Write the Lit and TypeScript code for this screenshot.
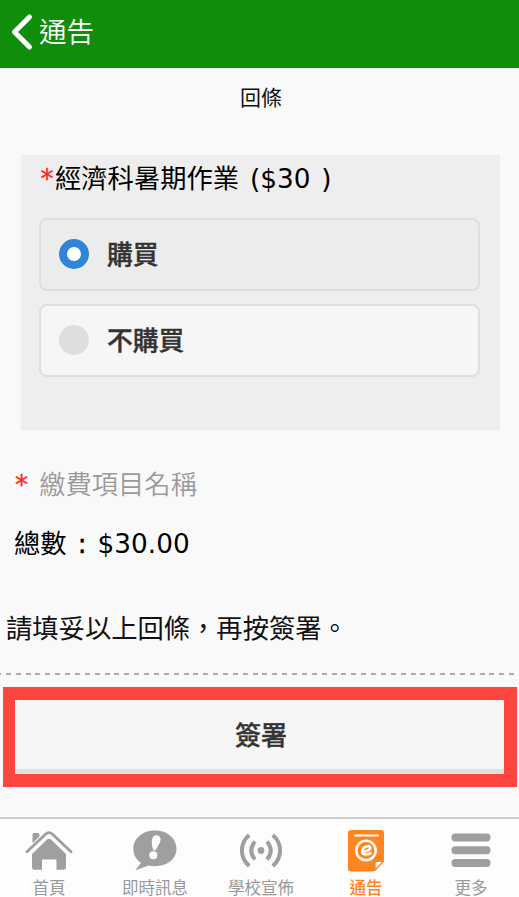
import { LitElement, html, css, svg } from "lit";
import { customElement, property, state } from "lit/decorators.js";
import { classMap } from "lit/directives/class-map.js";

const icons = {
  home: svg`<svg width="50" height="44" viewBox="0 0 50 44"><g fill="#9f9f9f"><path d="M8.500 18V5.500Q8.500 4 10 4H14Q15.500 4 15.500 5.500V12Z"/><path d="M8 25L23 10.500Q25 8.800 27 10.500L42 25V38Q42 40.700 39.500 40.700H32.500V30.500H18V40.700H10.500Q8 40.700 8 38Z"/></g><path d="M3 22.800L21.500 5.200Q25 2 28.500 5.200L47 22.800" fill="none" stroke="#fdfdfd" stroke-width="5"/><path d="M3 22.800L21.500 5.200Q25 2 28.500 5.200L47 22.800" fill="none" stroke="#9f9f9f" stroke-width="2.800" stroke-linecap="round"/></svg>`,
  message: svg`<svg width="48" height="44" viewBox="0 0 48 44"><path d="M24 1.500C12 1.500 2.300 9 2.300 20C2.300 26 5.500 31 10 33.800L4.200 41.500L17.500 36.500C32 39.500 45.500 32 45.500 20C45.500 9 36 1.500 24 1.500Z" fill="#9f9f9f"/><path d="M25 6.200C29 6.200 30.300 9 29.200 13L25 20.500Q23.500 22.700 22 20.500C20 15 20 6.200 25 6.200Z" fill="#fdfdfd"/><circle cx="22.300" cy="26.300" r="4" fill="#fdfdfd"/></svg>`,
  broadcast: svg`<svg width="48" height="44" viewBox="0 0 48 44"><circle cx="24" cy="21.500" r="3.400" fill="#9f9f9f"/><g fill="none" stroke="#9f9f9f" stroke-width="4"><path d="M18 12.500Q10.500 21.500 18 30.500M30 12.500Q37.500 21.500 30 30.500"/><path d="M12.200 6C2.500 14.500 2.500 28.500 12.200 37M35.800 6C45.500 14.500 45.500 28.500 35.800 37"/></g></svg>`,
  notice: svg`<svg width="48" height="44" viewBox="0 0 48 44"><path d="M9 1H39Q42 1 42 4V31.500L32 42.500H9Q6 42.500 6 39.500V4Q6 1 9 1Z" fill="#ff8520"/><path d="M12.500 6.500H36" stroke="#fdfdfd" stroke-width="2" stroke-linecap="round"/><circle cx="24" cy="21.500" r="9.700" fill="none" stroke="#fdfdfd" stroke-width="2.500"/><path d="M19.300 22.700C24 22.700 29 20.700 28.200 18.300C27.200 16 20.800 17.300 20.300 22C20 26 25.500 26.500 29.500 23.500" fill="none" stroke="#fdfdfd" stroke-width="2.700"/><path d="M42.500 31V43H31.500Z" fill="#fdfdfd"/><path d="M33 41.300V32.300H41.400Z" fill="#fdfdfd" stroke="#ff8520" stroke-width="1.300" stroke-linejoin="round"/></svg>`,
  more: svg`<svg width="48" height="44" viewBox="0 0 48 44"><g fill="#9f9f9f"><rect x="4.500" y="4.500" width="39" height="8" rx="3.700"/><rect x="4.500" y="17.200" width="39" height="8" rx="3.700"/><rect x="4.500" y="30" width="39" height="8" rx="3.700"/></g></svg>`,
};

@customElement("radio-option")
class RadioOption extends LitElement {
  @property() label = "";
  @property({ type: Boolean }) checked = false;

  static styles = css`
    :host { display: block; }
    .option {
      box-sizing: border-box;
      height: 73px;
      border: 2px solid #dedede;
      border-radius: 8px;
      background: #f6f6f6;
      display: flex;
      align-items: center;
      padding: 0 0 2px 18px;
      gap: 18px;
      color: #333;
      font-size: 25.8px;
      font-weight: 500;
      line-height: 38px;
      -webkit-text-stroke: 0.4px #333;
      cursor: pointer;
    }
    .option.checked { background: #ececec; }
    .label { padding-bottom: 2px; }
    .dot {
      box-sizing: border-box;
      width: 30px;
      height: 30px;
      border-radius: 50%;
      background: #dedede;
    }
    .checked .dot { background: #fff; border: 8px solid #3085d6; }
  `;

  render() {
    return html`<div class=${classMap({ option: true, checked: this.checked })}>
      <span class="dot"></span><span class="label">${this.label}</span>
    </div>`;
  }
}

@customElement("app-root")
class AppRoot extends LitElement {
  @state() private choice = "購買";

  static styles = css`
    :host {
      display: flex;
      flex-direction: column;
      box-sizing: border-box;
      height: 897px;
      background: #f9f9f9;
      color: #111;
      font-family: "DejaVu Sans", "Noto Sans CJK TC", sans-serif;
      font-size: 26.3px;
      white-space: nowrap;
    }
    .header {
      height: 68px;
      flex: none;
      box-sizing: border-box;
      padding: 0 0 5px 10px;
      display: flex;
      align-items: center;
      gap: 5px;
      background: #0f8d0b;
      color: #fff;
      font-family: "Noto Sans CJK TC", sans-serif;
      font-size: 27.6px;
      font-weight: 350;
    }
    .header svg { display: block; }
    .header span { padding-bottom: 3px; }
    .title {
      height: 87px;
      box-sizing: border-box;
      padding: 12px 0 0 3px;
      text-align: center;
      font: 400 21px/32px "Noto Sans CJK TC", sans-serif;
    }
    .card {
      height: 275px;
      box-sizing: border-box;
      margin: 0 19px 0 21px;
      padding: 0 20px 0 18px;
      background: #eee;
    }
    .question { height: 63px; line-height: 48px; color: #000; word-spacing: 2.500px; }
    .req { color: #ff291f; -webkit-text-stroke: 0.3px #ff291f; }
    .question .req { display: inline-block; width: 16px; text-align: center; }
    .choices { display: grid; gap: 13px; }
    .choices radio-option { font-family: "Noto Sans CJK TC", sans-serif; }
    .item { margin: 35px 0 0 15px; line-height: 40px; color: #999; display: flex; gap: 11px; }
    .name { font-weight: 350; }
    .total { margin: 19px 0 0 14px; line-height: 40px; color: #000; display: flex; }
    .colon { width: 31px; text-align: center; -webkit-text-stroke: 0.5px #000; }
    .hint { margin: 45px 0 0 6px; line-height: 40px; }
    .rule {
      height: 2px;
      margin: 24px 3px 0 0;
      flex: none;
      background: repeating-linear-gradient(90deg, #aaa 0 5px, transparent 5px 9.870px) -4px 0;
      background-size: 530px 2px;
    }
    .sign {
      height: 100px;
      box-sizing: border-box;
      margin: 12px 2px 0 3px;
      border: 13px solid #ff4540;
      border-left-width: 12px;
      background: #f6f6f6;
      display: flex;
      flex-direction: column;
    }
    .button {
      flex: 1;
      border: 0;
      border-bottom: 5px solid #dde1df;
      padding: 0 0 2px 3px;
      background: #f6f6f6;
      color: #333;
      font: 500 26px/38px "Noto Sans CJK TC", sans-serif;
      -webkit-text-stroke: 0.4px #333;
    }
    .nav {
      margin-top: auto;
      height: 80px;
      box-sizing: border-box;
      border-top: 2px solid #ccc;
      padding: 10px 0 0;
      background: #fdfdfd;
      display: grid;
      grid-template-columns: 98px 114px 98px 112px 98px;
      justify-content: start;
    }
    .tab {
      display: flex;
      flex-direction: column;
      align-items: center;
      color: #999;
      font: 400 16.500px/20px "Noto Sans CJK TC", sans-serif;
      gap: 4px;
    }
    .tab svg { display: block; flex: none; }
    .tab.active { color: #ff8520; font-weight: 500; }
  `;

  private tab(icon: unknown, label: string, active = false) {
    return html`<div class=${classMap({ tab: true, active })}>${icon}<span>${label}</span></div>`;
  }

  render() {
    return html`
      <header class="header">
        <svg width="24" height="38" viewBox="0 0 24 38">
          <path d="M19.500 4L4.500 19L19.500 34" fill="none" stroke="#fff" stroke-width="5" stroke-linecap="round" stroke-linejoin="round"/>
        </svg>
        <span>通告</span>
      </header>
      <div class="title">回條</div>
      <section class="card">
        <div class="question"><span class="req">*</span>經濟科暑期作業 ($30 )</div>
        <div class="choices">
          ${["購買", "不購買"].map(
            (c) => html`<radio-option .label=${c} .checked=${this.choice === c} @click=${() => (this.choice = c)}></radio-option>`
          )}
        </div>
      </section>
      <div class="item"><span class="req">*</span><span class="name">繳費項目名稱</span></div>
      <div class="total"><span>總數</span><span class="colon">:</span><span>$30.00</span></div>
      <div class="hint">請填妥以上回條，再按簽署。</div>
      <div class="rule"></div>
      <div class="sign"><button class="button">簽署</button></div>
      <nav class="nav">
        ${this.tab(icons.home, "首頁")} ${this.tab(icons.message, "即時訊息")}
        ${this.tab(icons.broadcast, "學校宣佈")} ${this.tab(icons.notice, "通告", true)}
        ${this.tab(icons.more, "更多")}
      </nav>
    `;
  }
}
